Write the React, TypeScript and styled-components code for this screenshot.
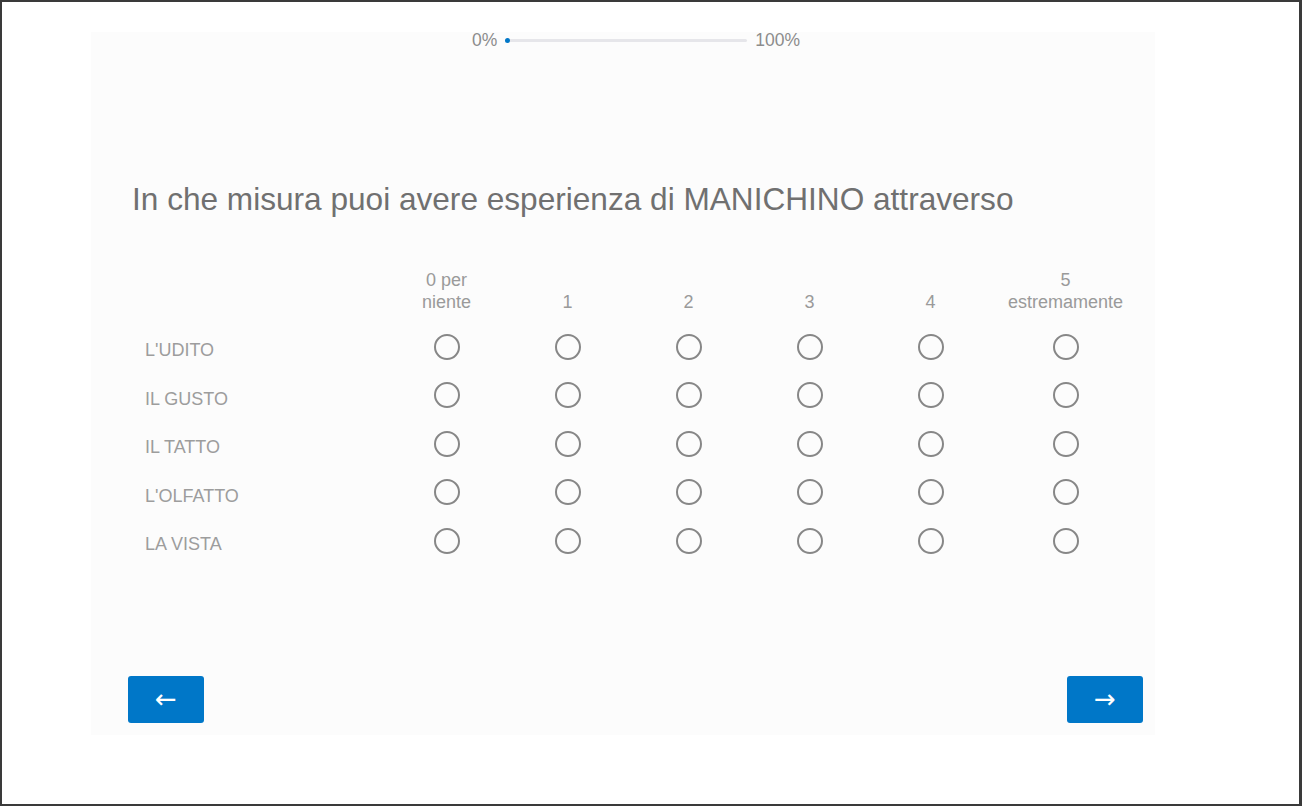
import React from "react";

import styled, { createGlobalStyle } from "styled-components";

const GlobalStyle = createGlobalStyle`
  html,
  body {
    margin: 0;
    padding: 0;
    background: #fff;
  }

  body {
    font-family: "Liberation Sans", Arial, sans-serif;
  }
`;

const Frame = styled.div`
  box-sizing: border-box;
  width: 1302px;
  height: 806px;
  border: 2px solid #3a3a3a;
  border-right-width: 3px;
  background: #fff;
  padding: 30px 0 0 89px;
`;

const Panel = styled.div`
  width: 1064px;
  height: 703px;
  background: #fcfcfc;
  display: flex;
  flex-direction: column;
`;

const ProgressRow = styled.div`
  display: flex;
  align-items: center;
  gap: 8px;
  padding-left: 381px;
  height: 16px;
  line-height: 16px;
  font-size: 17.5px;
  color: #8c8c8c;
`;

const ProgressTrack = styled.div`
  position: relative;
  width: 242px;
  height: 3px;
  border-radius: 2px;
  background: #e6e6ea;
`;

const ProgressDot = styled.span`
  position: absolute;
  left: 0;
  top: -1px;
  width: 5px;
  height: 5px;
  border-radius: 50%;
  background: #0077c8;
`;

const Question = styled.h1`
  margin: 133px 0 0 41px;
  font-size: 31.6px;
  font-weight: normal;
  line-height: 36px;
  color: #707070;
`;

const Matrix = styled.div`
  display: grid;
  grid-template-columns: 254px repeat(5, 121px) 149px;
  grid-template-rows: 53.5px;
  grid-auto-rows: 48.5px;
  margin: 52px 0 0 41px;
`;

const HeaderCell = styled.div`
  display: flex;
  align-self: start;
  align-items: flex-end;
  justify-content: center;
  text-align: center;
  height: 44px;
  font-size: 18px;
  line-height: 22px;
  color: #9a9a9a;
`;

const HeaderRow = styled.div`
  display: contents;
`;

const RowLabel = styled.div`
  display: flex;
  align-items: center;
  padding: 8px 0 0 13px;
  font-size: 18px;
  color: #9d9d9d;
`;

const RadioCell = styled.label`
  display: flex;
  align-items: center;
  justify-content: center;
`;

const Radio = styled.span`
  box-sizing: border-box;
  width: 26px;
  height: 26px;
  border-radius: 50%;
  border: 2px solid #878787;
`;

const Nav = styled.div`
  display: flex;
  justify-content: space-between;
  margin-top: auto;
  padding: 0 12px 12px 37px;
`;

const NavButton = styled.button`
  width: 76px;
  height: 47px;
  border: none;
  border-radius: 3px;
  background: #0077c8;
  color: #fff;
  font-family: "DejaVu Sans", sans-serif;
  font-size: 26px;
  line-height: 1;
  padding: 0 0 2px;
  cursor: pointer;
`;

const columns: React.ReactNode[] = [
  <>0 per<br />niente</>,
  "1",
  "2",
  "3",
  "4",
  <>5<br />estremamente</>,
];

const rows = ["L'UDITO", "IL GUSTO", "IL TATTO", "L'OLFATTO", "LA VISTA"];

const App: React.FC = () => {
  return (
    <>
      <GlobalStyle />
      <Frame>
        <Panel>
          <ProgressRow>
            <span>0%</span>
            <ProgressTrack>
              <ProgressDot />
            </ProgressTrack>
            <span>100%</span>
          </ProgressRow>

          <Question>In che misura puoi avere esperienza di MANICHINO attraverso</Question>

          <Matrix>
            <HeaderRow>
              <HeaderCell />
              {columns.map((col, index) => (
                <HeaderCell key={index}>
                  <span>{col}</span>
                </HeaderCell>
              ))}
            </HeaderRow>
            {rows.map((row) => (
              <React.Fragment key={row}>
                <RowLabel>{row}</RowLabel>
                {columns.map((_, index) => (
                  <RadioCell key={index}>
                    <Radio />
                  </RadioCell>
                ))}
              </React.Fragment>
            ))}
          </Matrix>

          <Nav>
            <NavButton>←</NavButton>
            <NavButton>→</NavButton>
          </Nav>
        </Panel>
      </Frame>
    </>
  );
};

export default App;
